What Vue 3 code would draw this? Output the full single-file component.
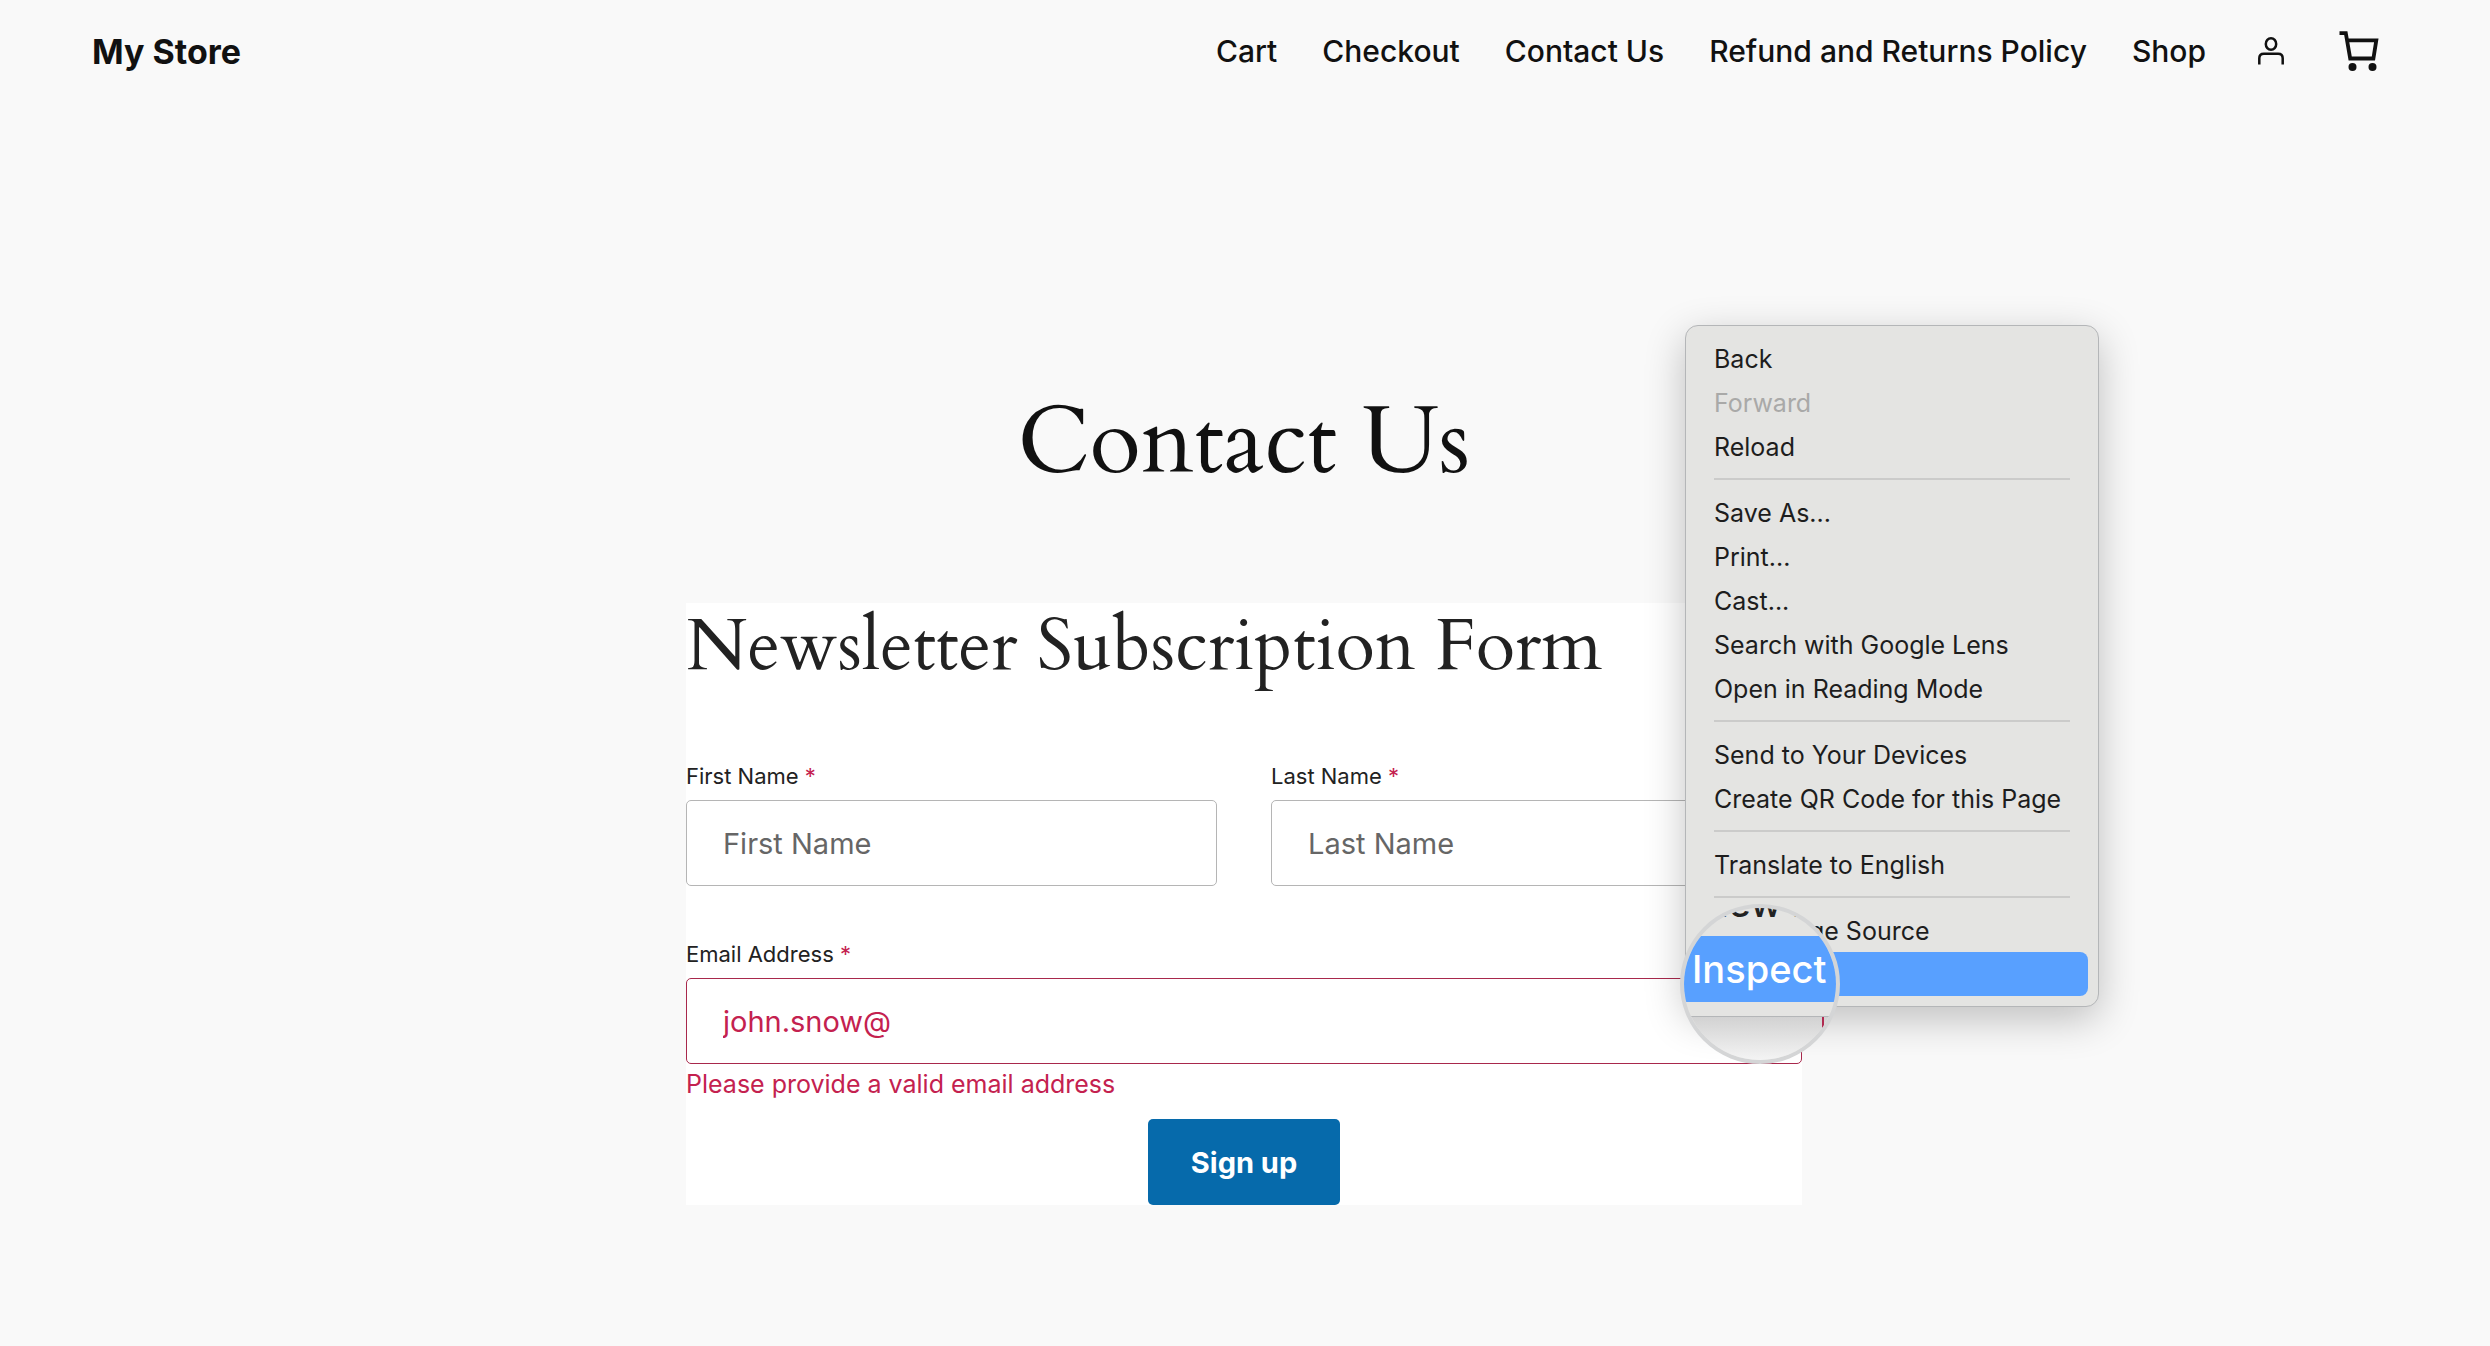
<script setup>
import { ref } from 'vue'

const navLinks = ['Cart', 'Checkout', 'Contact Us', 'Refund and Returns Policy', 'Shop']

const menuGroups = [
  [{ label: 'Back' }, { label: 'Forward', disabled: true }, { label: 'Reload' }],
  [
    { label: 'Save As...' },
    { label: 'Print...' },
    { label: 'Cast...' },
    { label: 'Search with Google Lens' },
    { label: 'Open in Reading Mode' },
  ],
  [{ label: 'Send to Your Devices' }, { label: 'Create QR Code for this Page' }],
  [{ label: 'Translate to English' }],
  [{ label: 'View Page Source' }, { label: 'Inspect', active: true }],
]

const firstName = ref('')
const lastName = ref('')
const email = ref('john.snow@')
</script>

<template>
  <div class="page">
    <header class="site-header">
      <a class="brand" href="#">My Store</a>
      <nav class="nav">
        <a v-for="link in navLinks" :key="link" href="#">{{ link }}</a>
        <a class="account" href="#" aria-label="Account">
          <svg width="28" height="30" viewBox="0 0 28 30" fill="none" stroke="#111" stroke-width="2.5">
            <ellipse cx="14" cy="8" rx="5.2" ry="5.8" />
            <path d="M2.3 28.5v-6.2c0-2.8 1.8-4.6 4.6-4.6h14.2c2.8 0 4.6 1.8 4.6 4.6v6.2" />
          </svg>
        </a>
        <a class="cart" href="#" aria-label="Cart">
          <svg width="40" height="40" viewBox="0 0 40 40" fill="none" stroke="#111" stroke-width="3.8">
            <path d="M0.5 2.2h6.3l4.4 25.3h23.2l2.9-18.2H8" />
            <circle cx="13.5" cy="36" r="4" fill="#111" stroke="none" />
            <circle cx="33.5" cy="36" r="4" fill="#111" stroke="none" />
          </svg>
        </a>
      </nav>
    </header>

    <main class="main">
      <h1>Contact Us</h1>
      <form class="card" novalidate @submit.prevent>
        <h2>Newsletter Subscription Form</h2>
        <div class="row">
          <div class="field">
            <label for="first">First Name <span class="req">*</span></label>
            <input id="first" v-model="firstName" type="text" placeholder="First Name" />
          </div>
          <div class="field">
            <label for="last">Last Name <span class="req">*</span></label>
            <input id="last" v-model="lastName" type="text" placeholder="Last Name" />
          </div>
        </div>
        <div class="field invalid">
          <label for="email">Email Address <span class="req">*</span></label>
          <input id="email" v-model="email" type="email" aria-describedby="email-error" />
          <p id="email-error" class="error">Please provide a valid email address</p>
        </div>
        <button class="submit" type="submit">Sign up</button>
      </form>
    </main>

    <div class="menu">
      <div v-for="(group, i) in menuGroups" :key="i" class="group">
        <button
          v-for="item in group"
          :key="item.label"
          type="button"
          class="item"
          :class="{ active: item.active }"
          :disabled="item.disabled"
        >{{ item.label }}</button>
      </div>
      <div class="lens" aria-hidden="true">
        <div class="lens-row">View Page</div>
        <div class="lens-row lens-active">Inspect</div>
        <div class="lens-edge"></div>
        <div class="lens-below"></div>
      </div>
    </div>
  </div>
</template>

<style>
body {
  margin: 0;
  background: #f9f9f9;
}
</style>

<style scoped>
.page {
  position: relative;
  min-height: 100vh;
  overflow: hidden;
  background: #f9f9f9;
  color: #111;
  font-family: Inter, 'Liberation Sans', sans-serif;
}

.site-header {
  display: flex;
  align-items: center;
  justify-content: space-between;
  height: 102px;
  padding: 0 111px 0 92px;
}

.site-header a {
  color: #111;
  text-decoration: none;
}

.brand {
  font-size: 34px;
  font-weight: 700;
}

.nav {
  display: flex;
  align-items: center;
  gap: 45px;
  font-size: 30px;
  font-weight: 500;
}

.account,
.cart {
  display: flex;
}

.account {
  margin: 0 9px 0 6px;
}

.main {
  padding: 281px 41px 140px 39px;
}

h1 {
  margin: 0 0 100px;
  font: 400 94px/120px Cardo, 'Liberation Serif', serif;
  text-align: center;
}

.card {
  display: flex;
  flex-direction: column;
  max-width: 1116px;
  margin: 0 auto;
  background: #fff;
  color: #222;
}

h2 {
  margin: 0 0 69px;
  font: 400 72px/88px Cardo, 'Liberation Serif', serif;
}

.row {
  display: grid;
  grid-template-columns: 1fr 1fr;
  gap: 54px;
  margin-bottom: 52px;
}

.field {
  display: flex;
  flex-direction: column;
}

label {
  margin-bottom: 8px;
  font-size: 22px;
  line-height: 32px;
}

.req,
.error {
  color: #c4214f;
}

input {
  box-sizing: border-box;
  width: 100%;
  height: 86px;
  padding: 0 36px;
  border: 1px solid #b5b5b5;
  border-radius: 5px;
  background: #fff;
  color: #222;
  font: 400 29px Inter, 'Liberation Sans', sans-serif;
}

input::placeholder {
  color: #666;
  opacity: 1;
}

.invalid input {
  border-color: #a8284c;
  color: #c4214f;
}

.error {
  margin: 2px 0 17px;
  font-size: 25px;
  line-height: 36px;
}

.submit {
  align-self: center;
  height: 86px;
  padding: 0 43px;
  border: 0;
  border-radius: 5px;
  background: #066aab;
  color: #fff;
  font: 700 29px Inter, 'Liberation Sans', sans-serif;
}

.menu {
  position: absolute;
  top: 325px;
  left: calc(50% + 440px);
  box-sizing: border-box;
  width: 414px;
  padding: 10px;
  border: 1px solid #b4b6b8;
  border-radius: 13px;
  background: #e4e4e2;
  box-shadow: 0 12px 40px rgba(0, 0, 0, 0.24);
}

.group + .group::before {
  content: '';
  display: block;
  height: 2px;
  margin: 10px 18px;
  background: #cbcbca;
}

.item {
  display: block;
  width: 100%;
  height: 44px;
  padding: 2px 18px 0;
  border: 0;
  border-radius: 8px;
  background: none;
  color: #1d1d1d;
  font: 400 25px Inter, 'Liberation Sans', sans-serif;
  text-align: left;
  white-space: nowrap;
}

.item:disabled {
  color: #a9a9a8;
}

.item.active {
  background: #58a0ff;
  color: #fff;
}

.lens {
  position: absolute;
  left: -6px;
  bottom: -58px;
  box-sizing: border-box;
  display: flex;
  flex-direction: column;
  justify-content: flex-end;
  width: 160px;
  height: 160px;
  overflow: hidden;
  border: 4px solid #d4d5d6;
  border-radius: 50%;
  background: #e4e4e2;
  color: #222;
  font-size: 38px;
  font-weight: 500;
}

.lens-row {
  flex: none;
  height: 66px;
  padding-left: 8px;
  line-height: 66px;
  white-space: nowrap;
}

.lens-active {
  background: #58a0ff;
  color: #fff;
}

.lens-edge {
  flex: none;
  height: 14px;
  border-bottom: 1px solid #b4b6b8;
}

.lens-below {
  position: relative;
  flex: none;
  height: 43px;
  background: linear-gradient(#d2d2d2, #f4f4f4);
}

.lens-below::after {
  content: '';
  position: absolute;
  top: 0;
  right: 12px;
  width: 2px;
  height: 18px;
  background: #b02a50;
}
</style>
